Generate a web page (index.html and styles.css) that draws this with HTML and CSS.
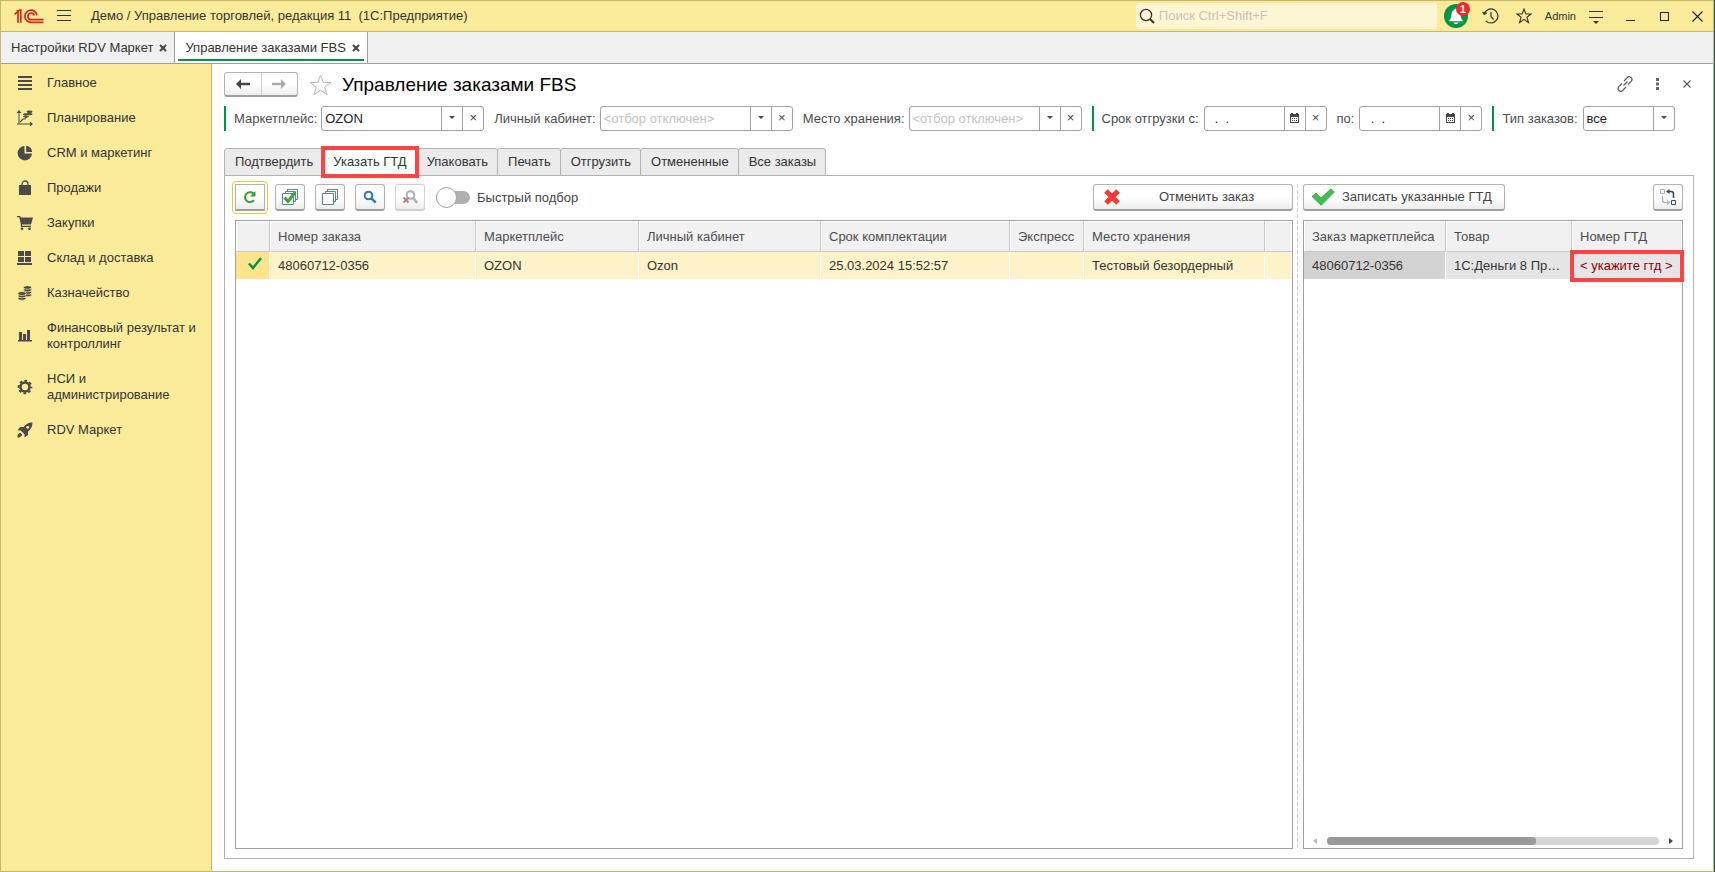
FILE: index.html
```html
<!DOCTYPE html>
<html lang="ru">
<head>
    <meta charset="utf-8">
    <title>Управление заказами FBS</title>
    <link rel="stylesheet" href="styles.css">
</head>
<body>
<div class="window">
    <header class="titlebar">
        <svg class="logo" width="30" height="15" viewBox="0 0 30 15" fill="none" stroke="#d9261c" stroke-width="1.7">
            <path d="M0.5 5.2 L4 2.6 V13.8"/>
            <path d="M2.6 2 L6.8 1 V13.8"/>
            <path d="M23 6.4 A6.1 6.1 0 1 0 17 13.4 H29.5"/>
            <path d="M20.2 6.6 A3.2 3.2 0 1 0 17 10.6 H29.5"/>
        </svg>
        <button class="icon-btn menu-btn" aria-label="Меню">
            <svg width="14" height="12" viewBox="0 0 14 12" stroke="#333"><path d="M0 .5h14M0 5.5h14M0 10.5h14"/></svg>
        </button>
        <span class="app-name">Демо / Управление торговлей, редакция 11 &nbsp;(1С:Предприятие)</span>
        <label class="search">
            <svg width="16" height="16" viewBox="0 0 16 16" fill="none" stroke="#333" stroke-width="1.3"><circle cx="7" cy="7" r="5.6"/><path d="M11 11l4 4" stroke-width="2"/></svg>
            <input type="text" placeholder="Поиск Ctrl+Shift+F">
        </label>
        <button class="bell" aria-label="Уведомления">
            <svg width="24" height="24" viewBox="0 0 24 24"><circle cx="12" cy="12" r="12" fill="#009646"/><path d="M12 4.5c-1.2 0-1.6.8-1.8 1.6C8 7 7.500 9 7.300 11.500 7.100 14 6.500 15.200 4.800 17.300H19.200C17.500 15.200 16.900 14 16.700 11.500 16.500 9 16 7 13.800 6.100 13.600 5.300 13.200 4.500 12 4.500zM9.500 18.500h5c-.4 1-1.300 1.600-2.500 1.600s-2.100-.6-2.500-1.600z" fill="#fff"/></svg>
            <span class="badge">1</span>
        </button>
        <button class="icon-btn history-btn" aria-label="История">
            <svg width="17" height="16" viewBox="0 0 17 16" fill="none" stroke="#333" stroke-width="1.200"><path d="M2.200 6A7 7 0 1 1 3.800 12.800"/><path d="M9 4v4.500l2.500 3"/><path d="M.3 4.200l2 2.800 2.700-2.200z" fill="#333" stroke-width=".5"/></svg>
        </button>
        <button class="icon-btn star-btn" aria-label="Избранное">
            <svg width="16" height="16" viewBox="0 0 16 16" fill="none" stroke="#333" stroke-width="1.100"><path d="M8 1l1.900 5h5.200l-4.200 3.200 1.600 5.300L8 11.300l-4.500 3.200 1.600-5.300L.9 6h5.200z"/></svg>
        </button>
        <a class="user" href="#">Admin</a>
        <button class="icon-btn panel-btn" aria-label="Настройки">
            <svg width="14" height="13" viewBox="0 0 14 13" stroke="#333"><path d="M0 .5h14M0 6.500h14"/><path d="M4 10h6l-3 3z" fill="#333" stroke="none"/></svg>
        </button>
        <button class="icon-btn min-btn" aria-label="Свернуть">
            <svg width="9" height="9" viewBox="0 0 9 9" stroke="#222"><path d="M0 8.500h9"/></svg>
        </button>
        <button class="icon-btn max-btn" aria-label="Развернуть">
            <svg width="9" height="9" viewBox="0 0 9 9" fill="none" stroke="#222"><rect x=".5" y=".5" width="8" height="8"/></svg>
        </button>
        <button class="icon-btn" aria-label="Закрыть">
            <svg width="11" height="11" viewBox="0 0 11 11" stroke="#222" stroke-width="1.100"><path d="M.5.5l10 10M10.500.5l-10 10"/></svg>
        </button>
    </header>

    <nav class="window-tabs">
        <a class="window-tab" href="#">Настройки RDV Маркет <svg width="8" height="8" viewBox="0 0 8 8"><path d="M1 1l6 6M7 1L1 7"/></svg></a>
        <a class="window-tab current" href="#">Управление заказами FBS <svg width="8" height="8" viewBox="0 0 8 8"><path d="M1 1l6 6M7 1L1 7"/></svg></a>
    </nav>

    <div class="body">
        <nav class="sidebar">
            <a href="#"><svg viewBox="0 0 16 16"><path d="M1 1h14v2H1zM1 5h14v2H1zM1 9h14v2H1zM1 13h14v2H1z"/></svg>Главное</a>
            <a href="#"><svg viewBox="0 0 16 16"><path d="M2 0l2.500 3h-2v10.500h10.500v-2l3 2.500-3 2.500v-2H0v-1h1.500V3H-.5z"/><path d="M3 12l3-3h2l2-3" fill="none" stroke="#4a4a4a" stroke-width="1.200"/><ellipse cx="12.500" cy="1.800" rx="3" ry="1.300"/><ellipse cx="12.500" cy="4.200" rx="3" ry="1.100"/><ellipse cx="8.500" cy="4.300" rx="2.500" ry="1.100"/><ellipse cx="9" cy="6.500" rx="3" ry="1.100"/></svg>Планирование</a>
            <a href="#"><svg viewBox="0 0 16 16"><path d="M7.500 1v7.500H15A7.200 7.200 0 1 1 7.500 1z"/><path d="M9.200.8A6.500 6.500 0 0 1 15.200 7H9.200z"/></svg>CRM и маркетинг</a>
            <a href="#"><svg viewBox="0 0 16 16"><path d="M2 5h12v10H2z"/><path d="M5 7V4a3 3 0 0 1 6 0v3" fill="none" stroke="#4a4a4a" stroke-width="1.300"/></svg>Продажи</a>
            <a href="#"><svg viewBox="0 0 16 16"><path d="M0 1h3.300l.6 1.500H16L14 9.500H5v1.300h9V12H3.800V9.500L2.400 2.200H0z"/><circle cx="5" cy="13.800" r="1.400"/><circle cx="12.500" cy="13.800" r="1.400"/></svg>Закупки</a>
            <a href="#"><svg viewBox="0 0 16 16"><path d="M1 1h6v5H1zM8 1h6v5H8zM1 7h6v5H1zM8 7h6v5H8zM0 13h15v2H0z"/></svg>Склад и доставка</a>
            <a href="#"><svg viewBox="0 0 16 16"><g stroke="#faeb9b" stroke-width=".7"><ellipse cx="10.500" cy="10" rx="4" ry="1.800"/><ellipse cx="10.500" cy="7.500" rx="4" ry="1.800"/><ellipse cx="10.500" cy="5" rx="4" ry="1.800"/><ellipse cx="10.500" cy="2.500" rx="4" ry="1.800"/><ellipse cx="5" cy="13.500" rx="4" ry="1.800"/><ellipse cx="5" cy="11" rx="4" ry="1.800"/><ellipse cx="5" cy="8.500" rx="4.200" ry="2"/></g></svg>Казначейство</a>
            <a href="#"><svg viewBox="0 0 16 16"><path d="M2 4h3v8h1V6h3v6h1V2h3v10h2v1.500H1V12h1z"/></svg>Финансовый результат и контроллинг</a>
            <a href="#"><svg viewBox="0 0 16 16"><circle cx="8" cy="8" r="4.500" fill="none" stroke="#4a4a4a" stroke-width="2.600"/><circle cx="8" cy="8" r="6.300" fill="none" stroke="#4a4a4a" stroke-width="2" stroke-dasharray="2.700 2.248" stroke-dashoffset="1.350"/></svg>НСИ и администрирование</a>
            <a href="#"><svg viewBox="0 0 16 16"><path d="M15.500.5C11 .5 8.500 2.500 6.500 5H3L.5 8.500h3.200l3.800 3.800v3.200L11 13V9.500c2.500-2 4.500-4.500 4.500-9z"/><path d="M3 10.500l2.500 2.500L2.500 15.500.5 15.500.5 13z"/><circle cx="10.700" cy="5.300" r="1.400" fill="#faeb9b"/></svg>RDV Маркет</a>
        </nav>

        <main class="content">
            <div class="page-head">
                <div class="history-nav">
                    <button aria-label="Назад"><svg width="14" height="10" viewBox="0 0 14 10" fill="#444"><path d="M0 5l5-5v3.700h9v2.600H5V10z"/></svg></button>
                    <button aria-label="Вперед"><svg width="14" height="10" viewBox="0 0 14 10" fill="#aaa"><path d="M14 5L9 0v3.700H0v2.600h9V10z"/></svg></button>
                </div>
                <button class="icon-btn fav" aria-label="В избранное">
                    <svg width="23" height="22" viewBox="0 0 23 22" fill="none" stroke="#b4bac2"><path d="M11.500 1.200l2.700 7.200h7.800l-6.300 4.800 2.400 7.600-6.600-4.600-6.600 4.600 2.400-7.600L1 8.400h7.800z"/></svg>
                </button>
                <h1>Управление заказами FBS</h1>
                <div class="page-tools">
                    <button class="icon-btn" aria-label="Ссылка"><svg width="16" height="16" viewBox="0 0 16 16" fill="none" stroke="#555" stroke-width="1.200"><path d="M6.500 9.500l4-4M7 5l3.200-3.300a2.600 2.600 0 0 1 4 3.600L11 8.500M9 11l-3.200 3.300a2.600 2.600 0 0 1-4-3.600L5 7.500"/></svg></button>
                    <button class="icon-btn" aria-label="Еще"><svg width="4" height="12" viewBox="0 0 4 12" fill="#666"><path d="M0 0h3v3H0zM0 4.500h3v3H0zM0 9h3v3H0z"/></svg></button>
                    <button class="icon-btn" aria-label="Закрыть"><svg width="8" height="8" viewBox="0 0 8 8" stroke="#555" stroke-width="1.100"><path d="M.5.5l7 7M7.500.5l-7 7"/></svg></button>
                </div>
            </div>

            <form class="filters">
                <div class="filter-group">
                    <label for="market">Маркетплейс:</label>
                    <div class="field market"><input id="market" type="text" value="OZON"><button type="button" class="drop" aria-label="Выбрать"></button><button type="button" class="clear" aria-label="Очистить"></button></div>
                    <label for="account">Личный кабинет:</label>
                    <div class="field account"><input id="account" type="text" placeholder="&lt;отбор отключен&gt;"><button type="button" class="drop" aria-label="Выбрать"></button><button type="button" class="clear" aria-label="Очистить"></button></div>
                    <label for="store">Место хранения:</label>
                    <div class="field store"><input id="store" type="text" placeholder="&lt;отбор отключен&gt;"><button type="button" class="drop" aria-label="Выбрать"></button><button type="button" class="clear" aria-label="Очистить"></button></div>
                </div>
                <div class="filter-group">
                    <label for="date-from">Срок отгрузки с:</label>
                    <div class="field date"><input id="date-from" type="text" value="&nbsp;&nbsp;.&nbsp;&nbsp;."><button type="button" aria-label="Календарь"><svg width="9" height="10" viewBox="0 0 9 10" fill="#444"><path d="M0 1h1V0h2v1h3V0h2v1h1v9H0zM1 4v5h7V4z" fill-rule="evenodd"/><path d="M2 5h1v1H2zM4 5h1v1H4zM6 5h1v1H6zM2 7h1v1H2zM4 7h1v1H4zM6 7h1v1H6z"/></svg></button><button type="button" class="clear" aria-label="Очистить"></button></div>
                    <label for="date-to">по:</label>
                    <div class="field date"><input id="date-to" type="text" value="&nbsp;&nbsp;.&nbsp;&nbsp;."><button type="button" aria-label="Календарь"><svg width="9" height="10" viewBox="0 0 9 10" fill="#444"><path d="M0 1h1V0h2v1h3V0h2v1h1v9H0zM1 4v5h7V4z" fill-rule="evenodd"/><path d="M2 5h1v1H2zM4 5h1v1H4zM6 5h1v1H6zM2 7h1v1H2zM4 7h1v1H4zM6 7h1v1H6z"/></svg></button><button type="button" class="clear" aria-label="Очистить"></button></div>
                </div>
                <div class="filter-group">
                    <label for="kind">Тип заказов:</label>
                    <div class="field kind"><select id="kind"><option>все</option></select><span class="drop"></span></div>
                </div>
            </form>

            <div class="tabs">
                <button>Подтвердить</button>
                <button class="active">Указать ГТД</button>
                <button>Упаковать</button>
                <button>Печать</button>
                <button>Отгрузить</button>
                <button>Отмененные</button>
                <button>Все заказы</button>
            </div>

            <div class="panel">
                <section class="pane orders">
                    <div class="toolbar">
                        <button class="btn square focused" aria-label="Обновить"><svg width="14" height="14" viewBox="0 0 14 14"><path d="M11 10.200A5 5 0 1 1 10.500 3.500" fill="none" stroke="#2ea32e" stroke-width="2"/><path d="M12.500 1v5.500H7z" fill="#2ea32e"/></svg></button>
                        <button class="btn square" aria-label="Отметить все"><svg width="16" height="16" viewBox="0 0 16 16" fill="#fff" stroke="#5f7f9c"><path d="M5.500.5h10v10h-10z"/><path d="M3.500 2.500h10v10h-10z"/><path d="M.5 4.500h11v11H.5z"/><path d="M2.500 8.500l3.500 4 7-9" fill="none" stroke="#35a635" stroke-width="3"/></svg></button>
                        <button class="btn square" aria-label="Снять отметки"><svg width="16" height="16" viewBox="0 0 16 16" fill="#fff" stroke="#5f7f9c"><path d="M5.500.5h10v10h-10z"/><path d="M3.500 2.500h10v10h-10z"/><path d="M.5 4.500h11v11H.5z"/></svg></button>
                        <button class="btn square" aria-label="Найти"><svg width="14" height="14" viewBox="0 0 14 14" fill="none" stroke="#2a7ab8" stroke-width="2"><circle cx="5.500" cy="5.500" r="3.800"/><path d="M8.200 8.200l4.500 4.500" stroke-width="2.500"/></svg></button>
                        <button class="btn square" disabled aria-label="Отменить поиск"><svg width="16" height="14" viewBox="0 0 16 14" fill="none" stroke="#a9b2ba" stroke-width="2"><circle cx="8.500" cy="5" r="3.800"/><path d="M11.200 8l4 5" stroke-width="2.500"/><path d="M1.500 7.500l5 5M6.500 7.500l-5 5" stroke="#b08a8a" stroke-width="2.200"/></svg></button>
                        <label class="toggle"><input type="checkbox"><span>Быстрый подбор</span></label>
                        <button class="btn cancel"><svg width="18" height="18" viewBox="0 0 18 18"><path d="M3 3l12 12M15 3L3 15" stroke="#f93535" stroke-width="5"/></svg><span>Отменить заказ</span></button>
                    </div>
                    <div class="grid-box">
                        <table>
                            <colgroup><col class="c-mark"><col class="c-num"><col class="c-market"><col class="c-account"><col class="c-term"><col class="c-express"><col class="c-place"><col></colgroup>
                            <thead>
                                <tr><th></th><th>Номер заказа</th><th>Маркетплейс</th><th>Личный кабинет</th><th>Срок комплектации</th><th>Экспресс</th><th>Место хранения</th><th></th></tr>
                            </thead>
                            <tbody>
                                <tr><td class="mark"><svg width="14" height="13" viewBox="0 0 14 13"><path d="M1 6.500l4 4.500L13 1" fill="none" stroke="#009646" stroke-width="2.500"/></svg></td><td>48060712-0356</td><td>OZON</td><td>Ozon</td><td>25.03.2024 15:52:57</td><td></td><td>Тестовый безордерный</td><td></td></tr>
                            </tbody>
                        </table>
                    </div>
                </section>

                <div class="splitter"></div>

                <section class="pane goods">
                    <div class="toolbar">
                        <button class="btn save"><svg width="24" height="18" viewBox="0 0 24 18"><path d="M1 8.500L5 5l5 5L20 .8l3.300 3.300L10.200 17.300z" fill="#3cc14e" stroke="#359a43" stroke-width=".8"/></svg>Записать указанные ГТД</button>
                        <button class="btn square swap" aria-label="Поменять"><svg width="16" height="16" viewBox="0 0 16 16" fill="none"><path d="M.5.5h4v4h-4z" stroke="#a0b0bc"/><path d="M11.500 11.500h4v4h-4z" stroke="#2c4a62"/><path d="M13.500 9V5q0-2.500-2.500-2.500H8" stroke="#2c4a62" stroke-width="1.500"/><path d="M6 2.500L9.500 0v5z" fill="#2c4a62"/><path d="M2.500 7v4q0 2.500 2.500 2.500h3M7 11.500l2.500 2L7 15.500" stroke="#a0b0bc" stroke-width="1.200"/></svg></button>
                    </div>
                    <div class="grid-box">
                        <table>
                            <colgroup><col class="c-order"><col class="c-item"><col></colgroup>
                            <thead>
                                <tr><th>Заказ маркетплейса</th><th>Товар</th><th>Номер ГТД</th></tr>
                            </thead>
                            <tbody>
                                <tr><td class="selected">48060712-0356</td><td>1С:Деньги 8 Пр…</td><td class="required">&lt; укажите гтд &gt;</td></tr>
                            </tbody>
                        </table>
                        <div class="scroll">
                            <svg width="4" height="6" viewBox="0 0 4 6" fill="#bbb"><path d="M4 0v6L0 3z"/></svg>
                            <div class="track"><div class="thumb"></div></div>
                            <svg width="4" height="6" viewBox="0 0 4 6" fill="#444"><path d="M0 0v6l4-3z"/></svg>
                        </div>
                    </div>
                </section>
            </div>
        </main>
    </div>
</div>
</body>
</html>
```

FILE: styles.css
```css
* {
    box-sizing: border-box;
}
body {
    margin: 0;
    background: #0b5c96;
    font-family: "Liberation Sans", Arial, sans-serif;
    font-size: 13px;
    line-height: 16px;
    color: #333;
}
button, input, select {
    font: inherit;
    color: inherit;
}
button {
    padding: 0;
    cursor: pointer;
}
a {
    color: inherit;
    text-decoration: none;
}
svg {
    display: block;
    flex: none;
}
.window {
    display: flex;
    flex-direction: column;
    min-height: 100vh;
    margin-right: 1px;
    border: 1px solid #c6b869;
    background: #fff;
}

/* title bar */
.titlebar {
    display: flex;
    align-items: center;
    height: 31px;
    padding: 0 10px 0 13px;
    background: #faeb9b;
    border-bottom: 1px solid #c6b869;
}
.icon-btn {
    border: none;
    background: none;
}
.menu-btn {
    margin-left: 13px;
}
.app-name {
    margin-left: 20px;
}
.search {
    display: flex;
    align-items: center;
    gap: 4px;
    width: 301px;
    height: 26px;
    margin-left: auto;
    padding-left: 3px;
    border-radius: 3px;
    background: #fdf6d2;
}
.search input {
    flex: 1;
    min-width: 0;
    padding: 0;
    border: none;
    outline: none;
    background: none;
}
input::placeholder {
    color: #c3c3c3;
    opacity: 1;
}
.bell {
    position: relative;
    margin-left: 7px;
    border: none;
    background: none;
}
.badge {
    position: absolute;
    top: -2px;
    right: -2px;
    width: 14px;
    height: 14px;
    border-radius: 50%;
    background: #fb2424;
    color: #fff;
    font-size: 11px;
    font-weight: bold;
    line-height: 14px;
}
.history-btn {
    margin-left: 14px;
}
.star-btn {
    margin-left: 17px;
}
.user {
    margin-left: 13px;
    font-size: 11px;
}
.panel-btn {
    margin: 2px 0 0 13px;
}
.min-btn {
    margin-left: 23px;
}
.max-btn {
    margin: 0 23px 0 25px;
}

/* open windows */
.window-tabs {
    display: flex;
    height: 32px;
    background: #f0f0f0;
    border-bottom: 1px solid #a0a0a0;
}
.window-tab {
    display: flex;
    align-items: center;
    gap: 6px;
    padding: 0 7px 0 10px;
    border-right: 1px solid #a0a0a0;
}
.window-tab svg {
    fill: none;
    stroke: #444;
    stroke-width: 2;
}
.window-tab.current {
    position: relative;
    background: #fff;
}
.window-tab.current::after {
    content: "";
    position: absolute;
    left: 3px;
    right: 3px;
    bottom: 2px;
    height: 2px;
    background: #009646;
}
.body {
    flex: 1;
    display: flex;
}

/* sections */
.sidebar {
    flex: none;
    width: 211px;
    padding-top: 1px;
    background: #faeb9b;
    border-right: 1px solid #c6b869;
}
.sidebar a {
    display: flex;
    align-items: center;
    gap: 14px;
    min-height: 35px;
    padding: 10px 12px 9px 16px;
}
.sidebar svg {
    width: 16px;
    height: 16px;
    fill: #4a4a4a;
    overflow: visible;
}

/* page */
.content {
    flex: 1;
    display: flex;
    flex-direction: column;
    min-width: 0;
    padding: 8px 19px 12px 12px;
}
.page-head {
    display: flex;
    align-items: center;
    height: 25px;
}
.history-nav {
    display: flex;
    width: 74px;
    height: 25px;
    border: 1px solid #b3b3b3;
    border-bottom: 2px solid #a0a0a0;
    border-radius: 3px;
    background: linear-gradient(#fff 50%, #ededed);
}
.history-nav button {
    flex: 1;
    display: flex;
    align-items: center;
    justify-content: center;
    border: none;
    background: none;
}
.history-nav button + button {
    border-left: 1px solid #d0d0d0;
}
.fav {
    margin: 0 10px 0 11px;
}
h1 {
    margin: 0;
    font-size: 19px;
    line-height: 24px;
    font-weight: normal;
    color: #000;
}
.page-tools {
    display: flex;
    align-items: center;
    gap: 23px;
    margin: 0 3px 2px auto;
}
.filters {
    display: flex;
    gap: 10px;
    margin-top: 9px;
}
.filter-group {
    display: flex;
    align-items: center;
    height: 25px;
    padding-left: 8px;
    border-left: 2px solid #009646;
    white-space: nowrap;
    color: #4d4d4d;
}
.filter-group label {
    margin-right: 5px;
}
.filter-group:first-child label {
    margin-right: 4px;
}
.field + label {
    margin-left: 10px;
}
.field {
    display: flex;
    height: 25px;
    border: 1px solid #a0a0a0;
    border-radius: 3px;
    background: #fff;
    color: #222;
}
.field input, .field select {
    flex: 1;
    min-width: 0;
    padding: 0 3px;
    border: none;
    outline: none;
    background: none;
    appearance: none;
}
.field button, .field span {
    display: flex;
    align-items: center;
    justify-content: center;
    width: 21px;
    padding-bottom: 2px;
    border: none;
    border-left: 1px solid #a0a0a0;
    background: none;
}
.drop::before {
    content: "";
    border: 3px solid transparent;
    border-top-color: #444;
    border-bottom: none;
}
.clear::before {
    content: "×";
    color: #444;
}
.market {
    width: 163px;
}
.account {
    width: 193px;
}
.store {
    width: 173px;
}
.date {
    width: 123px;
}
.kind {
    width: 92px;
}

/* order states */
.tabs {
    display: flex;
    height: 28px;
    margin-top: 17px;
}
.tabs button {
    margin-right: -1px;
    padding: 0 9px 0 10px;
    border: 1px solid #b3b3b3;
    border-radius: 3px 3px 0 0;
    background: #ebebeb;
}
.tabs .active {
    position: relative;
    height: 32px;
    margin: -2px -3px 0 -1px;
    padding: 0 8px;
    border: 4px solid #ff4343;
    border-radius: 0;
    background: #fff;
}
.panel {
    flex: 1;
    display: flex;
    margin-top: -1px;
    padding: 8px 10px 9px;
    border: 1px solid #b3b3b3;
}
.pane {
    display: flex;
    flex-direction: column;
}
.orders {
    flex: 1;
    min-width: 0;
}
.goods {
    flex: none;
    width: 380px;
}
.splitter {
    width: 1px;
    margin: 0 5px 0 4px;
    background: repeating-linear-gradient(#d4d4d4 0 4px, transparent 4px 6px);
}
.toolbar {
    display: flex;
    align-items: center;
    gap: 10px;
    height: 27px;
}
.btn {
    display: flex;
    align-items: center;
    height: 27px;
    border: 1px solid #b3b3b3;
    border-bottom: 2px solid #a0a0a0;
    border-radius: 3px;
    background: linear-gradient(#fff 50%, #ededed);
    color: #444;
}
.btn.square {
    justify-content: center;
    width: 30px;
}
.btn.focused {
    box-shadow: 0 0 0 2px #fff;
    outline: 1px solid #f5c52c;
    outline-offset: 2px;
    border-radius: 1px;
}
.btn:disabled {
    border-color: #d0d0d0;
}
.toggle {
    display: flex;
    align-items: center;
    gap: 7px;
    margin-left: 1px;
    color: #444;
}
.toggle input {
    display: flex;
    align-items: center;
    appearance: none;
    width: 34px;
    height: 13px;
    margin: 0;
    border-radius: 7px;
    background: #b0b0b0;
}
.toggle input::before {
    content: "";
    width: 19px;
    height: 19px;
    border: 1px solid #a0a0a0;
    border-radius: 50%;
    background: #fff;
}
.cancel {
    width: 200px;
    margin-left: auto;
    padding-left: 9px;
}
.cancel span {
    flex: 1;
    text-align: center;
}
.save {
    gap: 7px;
    padding: 0 12px 0 7px;
}
.swap {
    margin-left: auto;
}

/* tables */
.grid-box {
    flex: 1;
    display: flex;
    flex-direction: column;
    margin-top: 9px;
    border: 1px solid #a0a0a0;
}
table {
    width: 100%;
    table-layout: fixed;
    border-collapse: separate;
    border-spacing: 0;
}
th, td {
    overflow: hidden;
    padding: 0 4px 0 8px;
    text-align: left;
    text-overflow: ellipsis;
    white-space: nowrap;
}
th {
    height: 31px;
    padding-left: 7px;
    border: 1px solid #fff;
    border-right-color: #c8c8c8;
    border-bottom-color: #c8c8c8;
    background: #f1f1f1;
    font-weight: normal;
    color: #4d4d4d;
}
th:last-child {
    border-right-color: #fff;
}
td {
    height: 28px;
    border-right: 1px solid #fff;
    border-bottom: 1px solid #fff;
    background: #fef2c8;
}
.mark {
    padding: 0 0 4px 12px;
    background: #ffe48c;
}
.goods td {
    background: #e5e5e5;
}
.goods .selected {
    background: #d3d3d3;
}
.goods .required {
    outline: 4px solid #ff4343;
    outline-offset: -2px;
    color: #8b0000;
}
.c-mark {
    width: 34px;
}
.c-num {
    width: 206px;
}
.c-market {
    width: 163px;
}
.c-account {
    width: 182px;
}
.c-term {
    width: 189px;
}
.c-express {
    width: 74px;
}
.c-place {
    width: 181px;
}
.c-order {
    width: 142px;
}
.c-item {
    width: 126px;
}
.scroll {
    display: flex;
    align-items: center;
    gap: 10px;
    margin-top: auto;
    padding: 0 9px 3px;
}
.track {
    flex: 1;
    height: 8px;
    border-radius: 4px;
    background: #d5d5d5;
}
.thumb {
    width: 63%;
    height: 8px;
    border-radius: 4px;
    background: #999;
}
```
